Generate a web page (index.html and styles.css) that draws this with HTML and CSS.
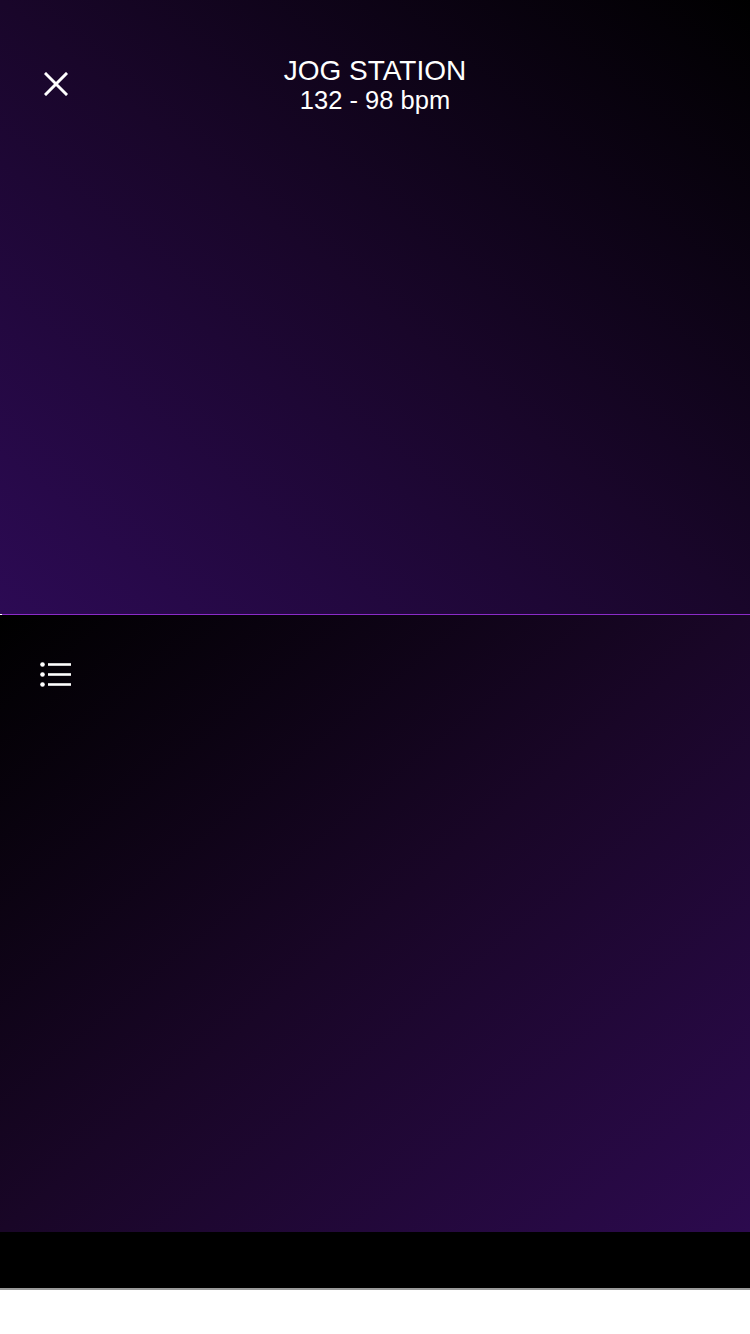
FILE: index.html
```html
<!DOCTYPE html>
<html>
<head>
<meta charset="utf-8">
<link rel="stylesheet" href="styles.css">
</head>
<body>
<div class="screen">
  <section class="top-panel">
    <header class="header">
      <div class="icon-btn close-btn" aria-label="Close">
        <svg width="24" height="24" viewBox="0 0 24 24">
          <path d="M2 2 L22 22 M22 2 L2 22" stroke="#fff" stroke-width="3" stroke-linecap="square" fill="none"/>
        </svg>
      </div>
      <div class="title-block">
        <div class="title">JOG STATION</div>
        <div class="subtitle">132 - 98 bpm</div>
      </div>
      <div class="spacer"></div>
    </header>
  </section>
  <div class="divider"></div>
  <section class="bottom-panel">
    <div class="icon-btn list-btn" aria-label="Playlist">
      <svg width="32" height="26" viewBox="0 0 32 26">
        <circle cx="2.5" cy="2.5" r="2.3" fill="#fff"/>
        <circle cx="2.5" cy="12.5" r="2.3" fill="#fff"/>
        <circle cx="2.5" cy="22.5" r="2.3" fill="#fff"/>
        <rect x="8" y="1.2" width="23" height="2.6" fill="#fff"/>
        <rect x="8" y="11.2" width="23" height="2.6" fill="#fff"/>
        <rect x="8" y="21.2" width="23" height="2.6" fill="#fff"/>
      </svg>
    </div>
  </section>
  <div class="bottom-bar"></div>
  <div class="bottom-rule"></div>
  <div class="bottom-white"></div>
</div>
</body>
</html>
```

FILE: styles.css
```css
html, body {
  margin: 0;
  padding: 0;
  background: #fff;
}

.screen {
  width: 750px;
  height: 1334px;
  display: flex;
  flex-direction: column;
  font-family: "Liberation Sans", Arial, sans-serif;
  color: #fff;
}

.top-panel {
  height: 614px;
  background: linear-gradient(to top right, #2c0a54 0%, #19062a 50%, #000 100%);
}

.header {
  display: grid;
  grid-template-columns: 112px 1fr 112px;
  align-items: start;
  padding-top: 56px;
}

.icon-btn {
  display: block;
  line-height: 0;
}

.icon-btn svg {
  display: block;
}

.close-btn {
  margin-top: 16px;
  margin-left: 44px;
  justify-self: start;
}

.title-block {
  text-align: center;
}

.title {
  font-size: 28px;
  line-height: 30px;
}

.subtitle {
  font-size: 25.5px;
  line-height: 28px;
}

.divider {
  height: 1px;
  margin-left: 2px;
  background: #8b2bc8;
}

.bottom-panel {
  height: 617px;
  background: linear-gradient(to bottom right, #000 0%, #190627 50%, #2c0a4e 100%);
  padding: 47px 0 0 40px;
  box-sizing: border-box;
}

.bottom-bar {
  height: 56px;
  background: #000;
}

.bottom-rule {
  height: 2px;
  background: #999;
}

.bottom-white {
  flex: 1;
  background: #fff;
}
```
